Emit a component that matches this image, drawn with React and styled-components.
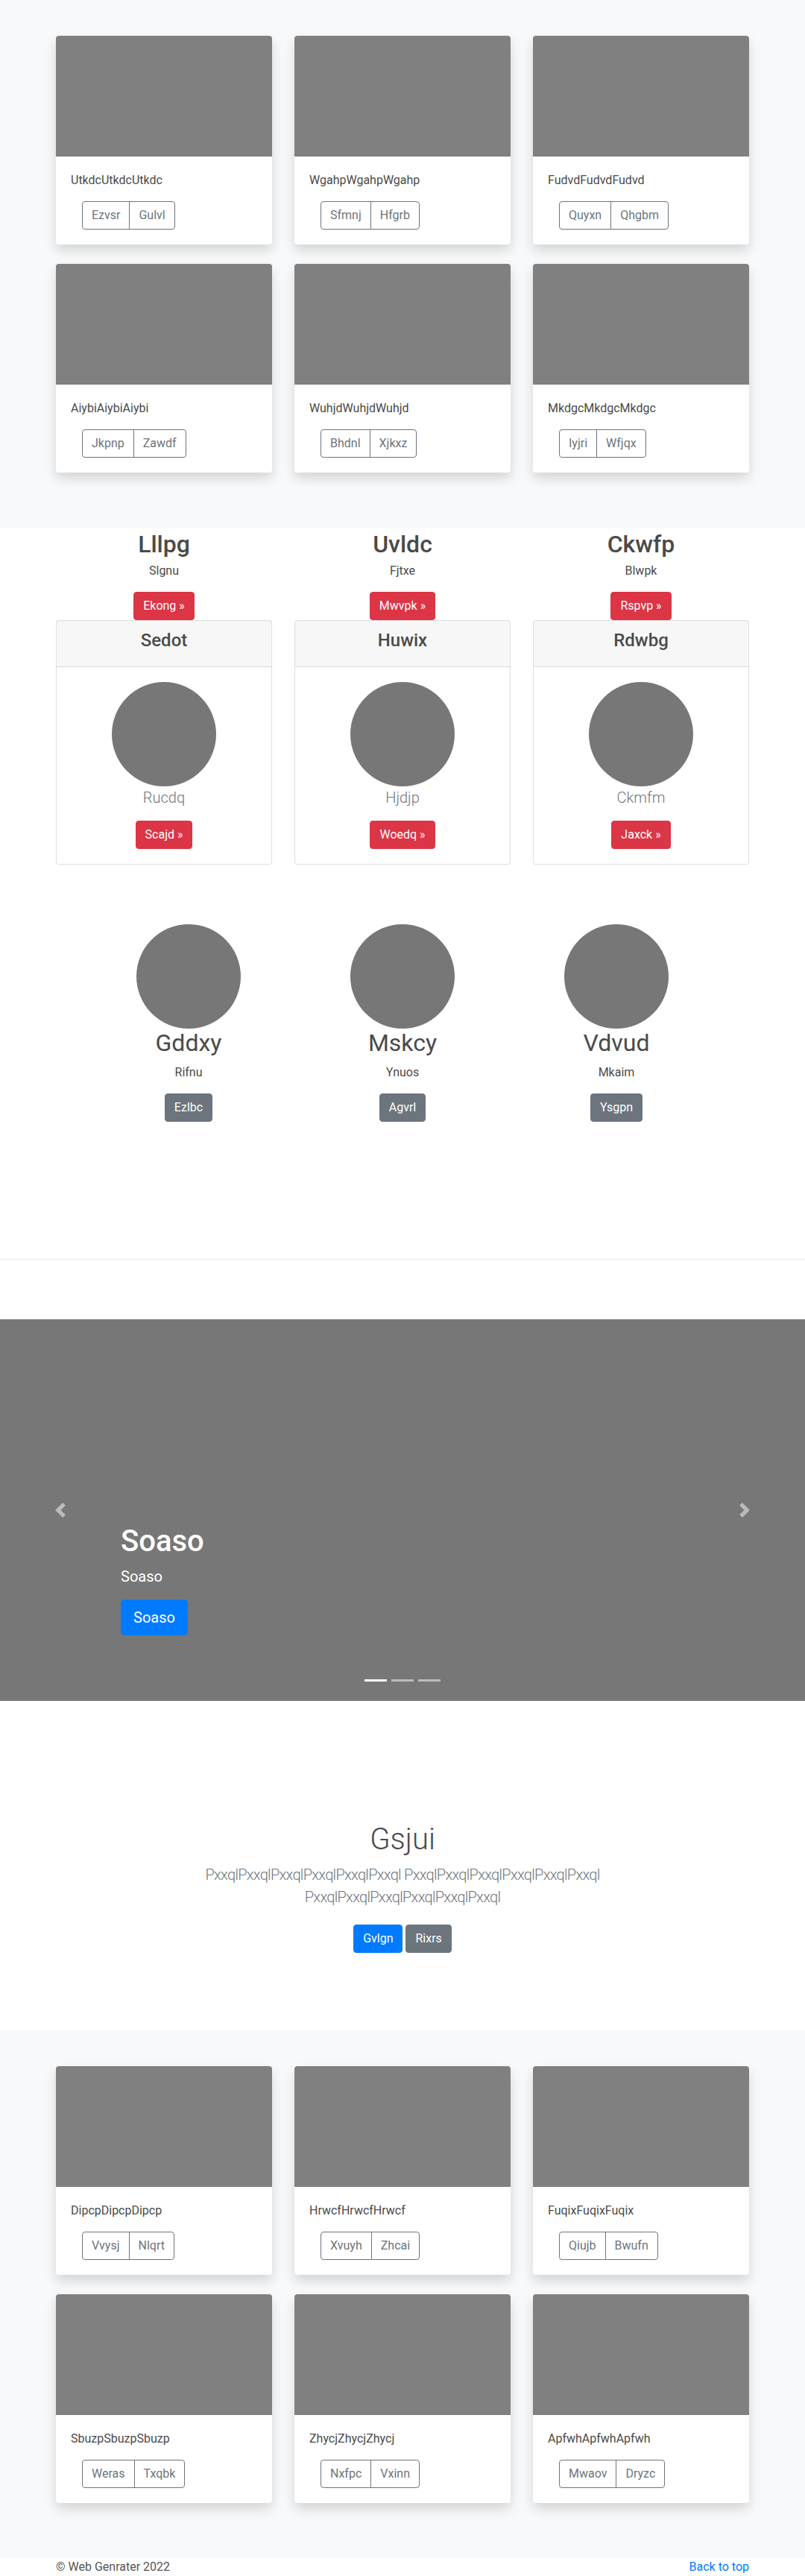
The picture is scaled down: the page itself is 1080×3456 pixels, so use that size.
import React from "react";
import styled, { createGlobalStyle } from "styled-components";

const GlobalStyle = createGlobalStyle`
  * {
    box-sizing: border-box;
  }
  body {
    margin: 0;
    font-family: Roboto, "Liberation Sans", Arial, sans-serif;
    font-size: 16px;
    line-height: 1.5;
    color: #4a4a4a;
    background: #fff;
  }
`;

const colors = {
  danger: "#dc3545",
  secondary: "#6c757d",
  primary: "#007bff",
};

const Container = styled.div`
  width: 930px;
  margin: 0 auto;
`;

const Button = styled.button`
  display: inline-block;
  font-family: inherit;
  font-weight: 400;
  font-size: ${(p) => (p.$lg ? "20px" : "16px")};
  line-height: ${(p) => (p.$lg ? "30px" : "24px")};
  padding: ${(p) => (p.$lg ? "8px 16px" : "6px 12px")};
  border: 1px solid ${(p) => colors[p.$variant]};
  border-radius: ${(p) => (p.$lg ? "4.8px" : "4px")};
  background: ${(p) => colors[p.$variant]};
  color: #fff;
  cursor: pointer;
`;

/* album cards */

const AlbumSection = styled.section`
  background: #f8f9fa;
  padding: 48px 0 74px;
`;

const CardGrid = styled.div`
  display: grid;
  grid-template-columns: repeat(3, 1fr);
  column-gap: 30px;
  row-gap: 26px;
`;

const AlbumCard = styled.div`
  background: #fff;
  border-radius: 4px;
  overflow: hidden;
  box-shadow: 0 8px 16px rgba(0, 0, 0, 0.15);
`;

const Thumb = styled.div`
  height: 162px;
  background: #808080;
`;

const CardBody = styled.div`
  padding: 20px;
`;

const CardText = styled.p`
  margin: 0 0 16px;
`;

const BtnGroup = styled.div`
  display: inline-flex;
  margin-left: 15px;
`;

const OutlineBtn = styled.button`
  font-family: inherit;
  font-size: 16px;
  line-height: 24px;
  padding: 6px 12px;
  color: #6c757d;
  background: transparent;
  border: 1px solid #6c757d;
  border-radius: 4px 0 0 4px;
  cursor: pointer;

  & + & {
    margin-left: -1px;
    border-radius: 0 4px 4px 0;
  }
`;

/* pricing-like columns */

const FeatureGrid = styled.div`
  display: grid;
  grid-template-columns: repeat(3, 1fr);
  column-gap: 30px;
`;

const FeatureCol = styled.div`
  text-align: center;
`;

const FeatureTitle = styled.h2`
  font-size: 32px;
  font-weight: 500;
  line-height: 1.2;
  margin: 3px 0 5px;
`;

const FeatureText = styled.p`
  margin: 0 0 16px;
`;

const ButtonRow = styled.div`
  display: flex;
  justify-content: center;
`;

const PriceCard = styled.div`
  border: 1px solid rgba(0, 0, 0, 0.125);
  border-radius: 4px;
  background: #fff;
  overflow: hidden;
`;

const PriceHeader = styled.div`
  padding: 12px 20px;
  background: rgba(0, 0, 0, 0.03);
  border-bottom: 1px solid rgba(0, 0, 0, 0.125);
`;

const PriceTitle = styled.h4`
  margin: 0 0 8px;
  font-size: 24px;
  font-weight: 500;
  line-height: 1.2;
`;

const PriceBody = styled.div`
  padding: 20px;
`;

const Avatar = styled.div`
  width: 140px;
  height: 140px;
  border-radius: 50%;
  background: #777;
  margin: 0 auto;
`;

const PriceLabel = styled.p`
  margin: 0 0 16px;
  font-size: 20px;
  font-weight: 300;
  line-height: 30px;
  color: #6c757d;
`;

/* marketing circles */

const Marketing = styled.div`
  display: grid;
  grid-template-columns: repeat(3, 287px);
  justify-content: center;
  padding: 80px 0 184px;
`;

const MarketingCol = styled.div`
  text-align: center;
`;

const MarketingTitle = styled.h2`
  font-size: 32px;
  font-weight: 400;
  line-height: 1.2;
  margin: 0 0 8px;
`;

const Divider = styled.hr`
  margin: 0;
  border: 0;
  border-top: 1px solid rgba(0, 0, 0, 0.1);
`;

/* carousel */

const Carousel = styled.div`
  position: relative;
  height: 512px;
  margin-top: 80px;
  background: #777;
  display: flex;
  align-items: flex-end;
  padding: 0 15% 52px;
`;

const Caption = styled.div`
  padding: 20px 0;
  color: #fff;
`;

const CaptionTitle = styled.h1`
  margin: 0 0 8px;
  font-size: 40px;
  font-weight: 500;
  line-height: 1.2;
`;

const CaptionText = styled.p`
  margin: 0 0 16px;
  font-size: 20px;
  line-height: 30px;
`;

const CaptionAction = styled.div`
  margin-bottom: 16px;
`;

const Control = styled.a`
  position: absolute;
  top: 0;
  bottom: 0;
  ${(p) => (p.$side === "next" ? "right: 0;" : "left: 0;")}
  width: 15%;
  display: flex;
  align-items: center;
  justify-content: center;
  opacity: 0.5;
`;

const Indicators = styled.ol`
  position: absolute;
  left: 0;
  right: 0;
  bottom: 26px;
  margin: 0;
  padding: 0;
  list-style: none;
  display: flex;
  justify-content: center;
`;

const Indicator = styled.li`
  width: 30px;
  height: 3px;
  margin: 0 3px;
  background: #fff;
  opacity: ${(p) => (p.$active ? 1 : 0.5)};
`;

/* jumbotron */

const Jumbotron = styled.section`
  padding: 162px 0 82px;
  text-align: center;
`;

const JumboTitle = styled.h1`
  margin: 0 0 8px;
  font-size: 40px;
  font-weight: 300;
  line-height: 1.2;
`;

const Lead = styled.p`
  max-width: 610px;
  margin: 0 auto 16px;
  font-size: 20px;
  font-weight: 300;
  letter-spacing: -0.7px;
  line-height: 30px;
  color: #6c757d;
`;

const JumboActions = styled.div`
  display: flex;
  justify-content: center;
  gap: 4px;
  padding: 6px 0;
  margin-bottom: 16px;
`;

/* footer */

const Footer = styled.footer`
  padding-bottom: 48px;
`;

const FooterInner = styled(Container)`
  display: flex;
  justify-content: space-between;
`;

const FooterText = styled.p`
  margin: 0;
  color: #555;
`;

const BackLink = styled.a`
  color: #007bff;
  text-decoration: none;
`;

const albumTop = [
  { text: "UtkdcUtkdcUtkdc", btns: ["Ezvsr", "Gulvl"] },
  { text: "WgahpWgahpWgahp", btns: ["Sfmnj", "Hfgrb"] },
  { text: "FudvdFudvdFudvd", btns: ["Quyxn", "Qhgbm"] },
  { text: "AiybiAiybiAiybi", btns: ["Jkpnp", "Zawdf"] },
  { text: "WuhjdWuhjdWuhjd", btns: ["Bhdnl", "Xjkxz"] },
  { text: "MkdgcMkdgcMkdgc", btns: ["Iyjri", "Wfjqx"] },
];

const albumBottom = [
  { text: "DipcpDipcpDipcp", btns: ["Vvysj", "Nlqrt"] },
  { text: "HrwcfHrwcfHrwcf", btns: ["Xvuyh", "Zhcai"] },
  { text: "FuqixFuqixFuqix", btns: ["Qiujb", "Bwufn"] },
  { text: "SbuzpSbuzpSbuzp", btns: ["Weras", "Txqbk"] },
  { text: "ZhycjZhycjZhycj", btns: ["Nxfpc", "Vxinn"] },
  { text: "ApfwhApfwhApfwh", btns: ["Mwaov", "Dryzc"] },
];

const features = [
  { title: "Lllpg", text: "Slgnu", cta: "Ekong", head: "Sedot", label: "Rucdq", btn: "Scajd" },
  { title: "Uvldc", text: "Fjtxe", cta: "Mwvpk", head: "Huwix", label: "Hjdjp", btn: "Woedq" },
  { title: "Ckwfp", text: "Blwpk", cta: "Rspvp", head: "Rdwbg", label: "Ckmfm", btn: "Jaxck" },
];

const people = [
  { name: "Gddxy", text: "Rifnu", btn: "Ezlbc" },
  { name: "Mskcy", text: "Ynuos", btn: "Agvrl" },
  { name: "Vdvud", text: "Mkaim", btn: "Ysgpn" },
];

const word = "Pxxql".repeat(6);
const leadText = `${word} ${word} ${word}`;

const Album = ({ items }) => (
  <AlbumSection>
    <Container>
      <CardGrid>
        {items.map((item) => (
          <AlbumCard key={item.text}>
            <Thumb />
            <CardBody>
              <CardText>{item.text}</CardText>
              <BtnGroup>
                {item.btns.map((b) => (
                  <OutlineBtn key={b}>{b}</OutlineBtn>
                ))}
              </BtnGroup>
            </CardBody>
          </AlbumCard>
        ))}
      </CardGrid>
    </Container>
  </AlbumSection>
);

const Chevron = ({ next }) => (
  <svg width="20" height="20" viewBox="0 0 8 8" fill="#fff">
    {next ? (
      <path d="M2.75 0l-1.5 1.5L3.75 4l-2.5 2.5L2.75 8l4-4-4-4z" />
    ) : (
      <path d="M5.25 0l-4 4 4 4 1.5-1.5L4.25 4l2.5-2.5L5.25 0z" />
    )}
  </svg>
);

const App = () => {
  return (
    <>
      <GlobalStyle />
      <Album items={albumTop} />

      <Container>
        <FeatureGrid>
          {features.map((f) => (
            <FeatureCol key={f.title}>
              <FeatureTitle>{f.title}</FeatureTitle>
              <FeatureText>{f.text}</FeatureText>
              <ButtonRow>
                <Button $variant="danger">{f.cta} »</Button>
              </ButtonRow>
              <PriceCard>
                <PriceHeader>
                  <PriceTitle>{f.head}</PriceTitle>
                </PriceHeader>
                <PriceBody>
                  <Avatar />
                  <PriceLabel>{f.label}</PriceLabel>
                  <Button $variant="danger">{f.btn} »</Button>
                </PriceBody>
              </PriceCard>
            </FeatureCol>
          ))}
        </FeatureGrid>
      </Container>

      <Marketing>
        {people.map((p) => (
          <MarketingCol key={p.name}>
            <Avatar />
            <MarketingTitle>{p.name}</MarketingTitle>
            <FeatureText>{p.text}</FeatureText>
            <Button $variant="secondary">{p.btn}</Button>
          </MarketingCol>
        ))}
      </Marketing>

      <Divider />

      <Carousel>
        <Caption>
          <CaptionTitle>Soaso</CaptionTitle>
          <CaptionText>Soaso</CaptionText>
          <CaptionAction>
            <Button $variant="primary" $lg>
              Soaso
            </Button>
          </CaptionAction>
        </Caption>
        <Control $side="prev" href="#">
          <Chevron />
        </Control>
        <Control $side="next" href="#">
          <Chevron next />
        </Control>
        <Indicators>
          <Indicator $active />
          <Indicator />
          <Indicator />
        </Indicators>
      </Carousel>

      <Jumbotron>
        <Container>
          <JumboTitle>Gsjui</JumboTitle>
          <Lead>{leadText}</Lead>
          <JumboActions>
            <Button $variant="primary">Gvlgn</Button>
            <Button $variant="secondary">Rixrs</Button>
          </JumboActions>
        </Container>
      </Jumbotron>

      <Album items={albumBottom} />

      <Footer>
        <FooterInner>
          <FooterText>© Web Genrater 2022</FooterText>
          <BackLink href="#">Back to top</BackLink>
        </FooterInner>
      </Footer>
    </>
  );
};

export default App;
